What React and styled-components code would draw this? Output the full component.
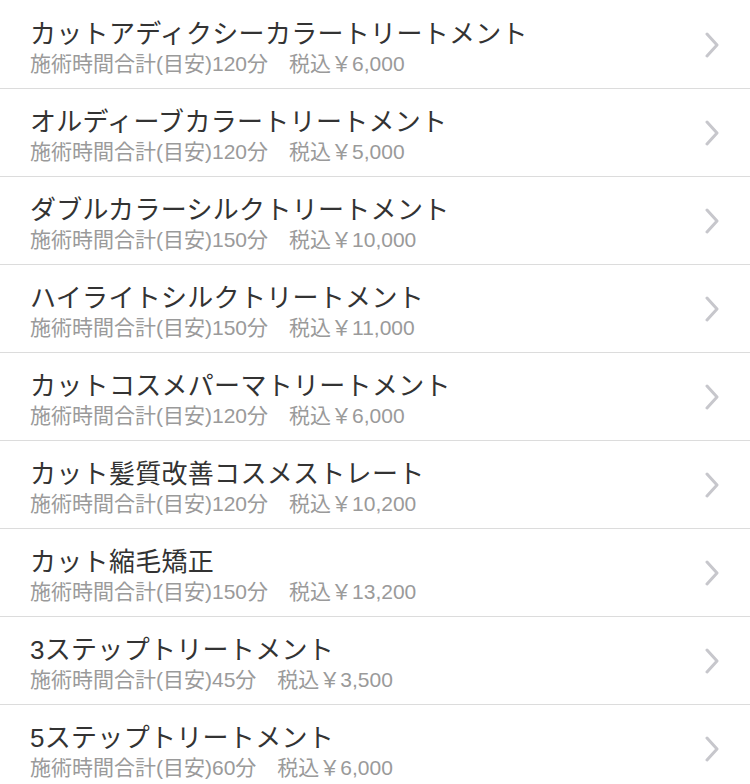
import React from 'react';
import styled, { createGlobalStyle } from 'styled-components';

const GlobalStyle = createGlobalStyle`
  body {
    margin: 0;
    background: #fff;
    font-family: "Liberation Sans", "Noto Sans CJK JP", sans-serif;
  }
`;

const List = styled.ul`
  list-style: none;
  margin: 0;
  padding: 1px 0 0;
  background: #fff;
`;

const Row = styled.li`
  display: flex;
  align-items: center;
  height: 88px;
  box-sizing: border-box;
  padding: 0 31px 0 30px;
  border-bottom: 1px solid #dcdcdc;
`;

const Texts = styled.div`
  flex: 1;
  display: flex;
  flex-direction: column;
  margin-top: 5px;
`;

const Title = styled.div`
  color: #333;
  font-size: 26px;
  line-height: 32px;
  letter-spacing: 0.3px;
`;

const Sub = styled.div`
  color: #9a9a9a;
  font-size: 21px;
  line-height: 27px;
`;

const Chevron = () => (
  <svg width="14" height="26" viewBox="0 0 14 26">
    <polyline points="2,2 12,13 2,24" fill="none" stroke="#c7c7cc" strokeWidth="3" strokeLinecap="round" strokeLinejoin="round" />
  </svg>
);

const menus = [
  ['カットアディクシーカラートリートメント', 120, '6,000'],
  ['オルディーブカラートリートメント', 120, '5,000'],
  ['ダブルカラーシルクトリートメント', 150, '10,000'],
  ['ハイライトシルクトリートメント', 150, '11,000'],
  ['カットコスメパーマトリートメント', 120, '6,000'],
  ['カット髪質改善コスメストレート', 120, '10,200'],
  ['カット縮毛矯正', 150, '13,200'],
  ['3ステップトリートメント', 45, '3,500'],
  ['5ステップトリートメント', 60, '6,000'],
];

export default function App() {
  return (
    <>
      <GlobalStyle />
      <List>
        {menus.map(([name, min, price]) => (
          <Row key={name}>
            <Texts>
              <Title>{name}</Title>
              <Sub>施術時間合計(目安){min}分　税込￥{price}</Sub>
            </Texts>
            <Chevron />
          </Row>
        ))}
      </List>
    </>
  );
}
